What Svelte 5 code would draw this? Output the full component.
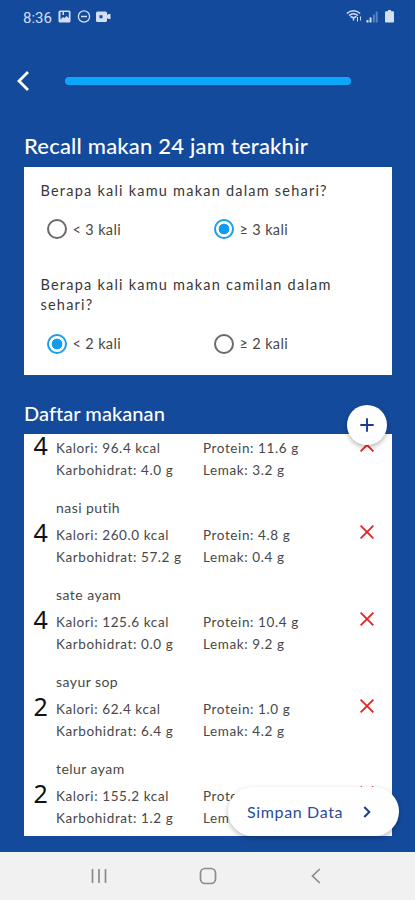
<script>
  const questions = [
    { text: ['Berapa kali kamu makan dalam sehari?'], options: ['< 3 kali', '≥ 3 kali'], picked: 1 },
    { text: ['Berapa kali kamu makan camilan dalam', 'sehari?'], options: ['< 2 kali', '≥ 2 kali'], picked: 0 }
  ];
  const foods = [
    { name: '', count: 4, kcal: '96.4', carb: '4.0', protein: '11.6', fat: '3.2' },
    { name: 'nasi putih', count: 4, kcal: '260.0', carb: '57.2', protein: '4.8', fat: '0.4' },
    { name: 'sate ayam', count: 4, kcal: '125.6', carb: '0.0', protein: '10.4', fat: '9.2' },
    { name: 'sayur sop', count: 2, kcal: '62.4', carb: '6.4', protein: '1.0', fat: '4.2' },
    { name: 'telur ayam', count: 2, kcal: '155.2', carb: '1.2', protein: '', fat: '' }
  ];
</script>

<div class="screen">
  <div class="status">
    <span class="time">8:36</span>
    <svg class="left-icons" width="54" height="14" viewBox="0 0 54 14">
      <path fill="#d3dff3" fill-rule="evenodd" d="M2 0.5h9a1.5 1.5 0 0 1 1.5 1.5v9a1.5 1.5 0 0 1-1.5 1.5H2A1.5 1.5 0 0 1 .5 11V2A1.5 1.5 0 0 1 2 .5zM2.5 2v7.500l2.500-2.500 1.500 1 2-2 2.300 2V2H6v3H4.500V2z" />
      <circle cx="26" cy="6.500" r="5.600" fill="none" stroke="#d3dff3" stroke-width="1.300" />
      <path d="M23 6.500h6" stroke="#d3dff3" stroke-width="1.500" />
      <path fill="#d3dff3" fill-rule="evenodd" d="M39.500 1.500h8a1.500 1.500 0 0 1 1.500 1.500v2l1.500-1h2v5h-2L49 8v2.500a1.500 1.500 0 0 1-1.500 1.500h-8a1.500 1.500 0 0 1-1.500-1.500V3a1.500 1.500 0 0 1 1.500-1.500zM41.500 5.300v3h3v-3z" />
    </svg>
    <svg class="right-icons" width="50" height="16" viewBox="0 0 50 16">
      <g fill="none" stroke="#d3dff3" stroke-width="1.500">
        <path d="M.8 4.500Q7.500-.8 14.200 4.500M3 6.500Q7.500 3 12 6.500M4.500 7.300Q7.500 9.500 10.500 7.300" />
        <path d="M7.500 8v3.500" />
        <path d="M11.500 8v4.500M14.500 7.500v4" stroke-width="1" />
      </g>
      <path fill="#d3dff3" d="M20.500 11h2v2.500h-2zM23.500 8.500h2v5h-2z" />
      <path fill="#5a80bf" d="M26.800 5.500h2v8h-2zM29.700 2.500h2v11h-2z" />
      <path fill="#d3dff3" d="M42 1h3v1.300h2a1 1 0 0 1 1 1V12.500a1 1 0 0 1-1 1h-7a1 1 0 0 1-1-1V3.300a1 1 0 0 1 1-1h2z" />
    </svg>
  </div>

  <header>
    <svg width="14" height="22" viewBox="0 0 14 22"><path d="M12 2 3 11l9 9" fill="none" stroke="#fff" stroke-width="2.800" /></svg>
    <div class="progress"></div>
  </header>

  <h1>Recall makan 24 jam terakhir</h1>
  <section class="card survey">
    {#each questions as q}
      <div class="question">
        <p>{#each q.text as line}<span class="line">{line}</span>{/each}</p>
        <div class="options">
          {#each q.options as option, i}
            <div class="option">
              <i class:on={q.picked === i}></i><span>{option}</span>
            </div>
          {/each}
        </div>
      </div>
    {/each}
  </section>

  <div class="list-head">
    <h2>Daftar makanan</h2>
    <div class="add">
      <svg width="14" height="14" viewBox="0 0 14 14"><path d="M7 .3v13.400M.3 7h13.400" stroke="#173d94" stroke-width="1.900" /></svg>
    </div>
  </div>
  <section class="card foods">
    <div class="scroll">
      {#each foods as f}
        <div class="food">
          <div class="name">{f.name}</div>
          <div class="detail">
            <b>{f.count}</b>
            <div class="facts first">
              <span>Kalori: {f.kcal} kcal</span>
              <span>Karbohidrat: {f.carb} g</span>
            </div>
            <div class="facts second">
              {#if f.protein}
                <span>Protein: {f.protein} g</span>
                <span>Lemak: {f.fat} g</span>
              {:else}
                <span>Prote</span>
                <span>Lem</span>
              {/if}
            </div>
            <svg width="14" height="14" viewBox="0 0 14 14"><path d="m.6.6 12.800 12.800M13.400.6.6 13.400" stroke="#e8201f" stroke-width="1.800" /></svg>
          </div>
        </div>
      {/each}
    </div>
  </section>

  <div class="save">
    <span>Simpan Data</span>
    <svg width="8" height="12" viewBox="0 0 8 12"><path d="m1.300 1 5 5-5 5" fill="none" stroke="#173d94" stroke-width="2" /></svg>
  </div>

  <nav>
    <svg width="16" height="16" viewBox="0 0 16 16"><path d="M1.500 1v14M8 1v14M14.500 1v14" stroke="#8b8b8b" stroke-width="1.700" /></svg>
    <svg class="home" width="18" height="18" viewBox="0 0 18 18"><rect x="1.500" y="1.500" width="15" height="15" rx="4.500" fill="none" stroke="#8b8b8b" stroke-width="1.700" /></svg>
    <svg width="10" height="16" viewBox="0 0 10 16"><path d="M8.800 1 1.500 8l7.300 7" fill="none" stroke="#8b8b8b" stroke-width="1.700" /></svg>
  </nav>
</div>

<style>
  .screen {
    position: relative;
    display: flex;
    flex-direction: column;
    width: 415px;
    height: 900px;
    overflow: hidden;
    background: #134a9c;
    font-family: Lato, 'Noto Sans', sans-serif;
    white-space: nowrap;
  }
  svg { display: block; flex: none; }
  .status {
    display: flex;
    align-items: center;
    height: 34px;
    padding: 0 18px 0 23px;
    color: #d3dff3;
  }
  .time { width: 35px; font: 15px/20px Roboto, sans-serif; padding-top: 1px; }
  .right-icons { margin-left: auto; margin-right: 1.500px; }
  header {
    display: flex;
    align-items: center;
    height: 22px;
    margin-top: 36px;
    padding: 0 64px 0 16px;
  }
  .progress {
    flex: 1;
    height: 8px;
    margin-left: 35px;
    border-radius: 4px;
    background: #0aa7fa;
  }
  h1, h2 { margin: 0; color: #fff; font-weight: 500; }
  h1 {
    height: 30px;
    margin: 39px 0 6px 24px;
    font-size: 22px;
    line-height: 30px;
    letter-spacing: 0.200px;
  }
  .card {
    flex: none;
    margin: 0 23.500px;
    background: #fff;
  }
  .survey { height: 208px; margin-top: -0.500px; }
  .question { padding: 14px 17px 0; height: 94px; box-sizing: border-box; }
  p {
    margin: 0;
    font-size: 14.500px;
    line-height: 20.500px;
    letter-spacing: 1.220px;
    color: #383838;
  }
  .line { display: block; }
  .options { display: flex; padding: 17.500px 0 0 6px; }
  .option { display: flex; flex: none; align-items: center; gap: 6px; width: 167px; height: 21px; }
  .option span { font-size: 14.500px; color: #484848; letter-spacing: 0.350px; }
  i {
    box-sizing: border-box;
    flex: none;
    width: 20px;
    height: 20px;
    border: 2px solid #6a6a6a;
    border-radius: 50%;
  }
  i.on {
    border-color: #189fee;
    background: radial-gradient(circle, #119cf0 5px, transparent 5.700px);
  }
  .list-head {
    position: relative;
    height: 59px;
    box-sizing: border-box;
    padding: 24px 0 0 24px;
  }
  h2 { font-size: 20px; line-height: 28px; letter-spacing: 0.050px; }
  .add {
    position: absolute;
    z-index: 2;
    left: 347px;
    top: 30px;
    display: flex;
    align-items: center;
    justify-content: center;
    width: 40px;
    height: 40px;
    border-radius: 50%;
    background: #fff;
    box-shadow: 0 2px 5px rgba(0, 0, 0, 0.300);
  }
  .foods { height: 402px; overflow: hidden; }
  .scroll { margin-top: -23px; }
  .food { height: 87px; color: #484848; font-size: 13.500px; }
  .name { height: 26px; padding-left: 32.500px; line-height: 19px; font-size: 14px; letter-spacing: 0.450px; }
  .detail { display: flex; align-items: flex-start; height: 45px; }
  b { width: 22.500px; margin-left: 10px; margin-top: -2px; font: 25px/20px 'Noto Sans', sans-serif; color: #111; }
  .facts { display: flex; flex-direction: column; line-height: 22.500px; letter-spacing: 0.600px; }
  .first { width: 147px; }
  .second { width: 157px; }
  .detail svg { margin-top: 1px; }
  .save {
    position: absolute;
    z-index: 3;
    left: 228px;
    top: 787px;
    display: flex;
    align-items: center;
    box-sizing: border-box;
    width: 171px;
    height: 49px;
    padding: 0 28px 0 19px;
    justify-content: space-between;
    border-radius: 25px;
    background: #fff;
    box-shadow: 0 2px 5px rgba(0, 0, 0, 0.280);
    color: #284b9d;
    font-size: 16px;
    letter-spacing: 0.650px;
  }
  nav {
    display: flex;
    align-items: center;
    justify-content: space-between;
    flex: none;
    height: 48px;
    box-sizing: border-box;
    padding: 0 94px 0 91px;
    margin-top: auto;
    background: #f1f1f1;
  }
  .home { margin-right: 3px; }
</style>
